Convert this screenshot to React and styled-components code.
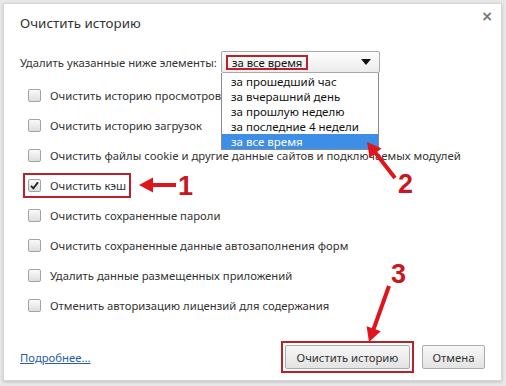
import React from "react";
import styled, { createGlobalStyle } from "styled-components";

const Global = createGlobalStyle`
  html, body { margin: 0; padding: 0; }
  body {
    background: #e8e8e8;
    font-family: "Noto Sans", "Open Sans", sans-serif;
    color: #333;
    width: 506px;
    height: 386px;
    overflow: hidden;
  }
`;

const FS = "11.3px";

const Page = styled.div`
  position: relative;
  width: 506px;
  height: 386px;
  padding: 3px 4px 5px 3px;
  box-sizing: border-box;
`;

const Card = styled.div`
  position: relative;
  height: 100%;
  box-sizing: border-box;
  background: #fff;
  border: 1px solid #d6d6d6;
  box-shadow: 0 1px 3px rgba(0, 0, 0, 0.18);
  padding: 0 16px 0 16px;
  display: flex;
  flex-direction: column;
`;

const Title = styled.div`
  margin-top: 9px;
  height: 20px;
  line-height: 20px;
  font-size: 13.4px;
  color: #333;
`;

const Close = styled.div`
  position: absolute;
  top: 4px;
  right: 8px;
  font-size: 14px;
  font-weight: 700;
  color: #777;
  font-family: "DejaVu Sans", sans-serif;
`;

const SelectRow = styled.div`
  margin-top: 18px;
  display: flex;
  align-items: center;
  height: 22px;
  font-size: ${FS};
`;

const SelectLabel = styled.span`
  width: 201px;
  flex-shrink: 0;
  white-space: nowrap;
`;

const SelectWrap = styled.div`
  position: relative;
  width: 159px;
  height: 22px;
`;

const SelectBox = styled.div`
  box-sizing: border-box;
  height: 22px;
  border: 1px solid #a9a9a9;
  border-radius: 2px;
  background: linear-gradient(#fdfdfd, #ececec);
  display: flex;
  align-items: center;
  justify-content: space-between;
  padding: 0 8px 0 4px;
`;

const Marked = styled.span`
  border: 2px solid #b8222a;
  padding: 0 4px;
  height: 15px;
  box-sizing: border-box;
  line-height: 11px;
  display: inline-flex;
  align-items: center;
  color: #111;
`;

const Caret = styled.span`
  width: 0;
  height: 0;
  border-left: 5px solid transparent;
  border-right: 5px solid transparent;
  border-top: 6px solid #111;
`;

const DropList = styled.div`
  position: absolute;
  top: 22px;
  left: 0;
  width: 158px;
  box-sizing: border-box;
  border: 1px solid #8a8a8a;
  border-top: none;
  background: #fff;
  z-index: 2;
  padding-top: 1px;
`;

const Option = styled.div`
  height: 15px;
  line-height: 15px;
  padding-left: 9px;
  font-size: 11.5px;
  color: ${(p) => (p.$active ? "#fff" : "#111")};
  background: ${(p) => (p.$active ? "#3d8ee6" : "transparent")};
`;

const List = styled.div`
  margin-top: 7px;
  display: flex;
  flex-direction: column;
`;

const Row = styled.div`
  height: 30px;
  display: flex;
  align-items: center;
  padding-left: 8px;
  font-size: ${FS};
`;

const RowInner = styled.span`
  display: inline-flex;
  align-items: center;
  gap: 9px;
  outline: ${(p) => (p.$on ? "2px solid #b8222a" : "none")};
  outline-offset: 3px;
`;

const Box = styled.span`
  width: 13px;
  height: 13px;
  box-sizing: border-box;
  border: 1px solid #a3a3a3;
  border-radius: 2px;
  background: linear-gradient(#fafafa, #dedede);
  display: inline-flex;
  align-items: center;
  justify-content: center;
`;

const Footer = styled.div`
  margin-top: auto;
  margin-bottom: 11px;
  display: flex;
  align-items: center;
  height: 24px;
`;

const Link = styled.a`
  font-size: ${FS};
  color: #2b5ca8;
  text-decoration: underline;
  margin-right: auto;
`;

const Frame = styled.div`
  border: 2px solid #b8222a;
  padding: 2px;
  margin: -4px 0;
  display: flex;
`;

const Button = styled.button`
  height: 24px;
  box-sizing: border-box;
  width: ${(p) => p.$w}px;
  margin-left: ${(p) => p.$ml || 0}px;
  border: 1px solid #acacac;
  border-radius: 2px;
  background: linear-gradient(#f7f7f7, #e3e3e3);
  font-family: "Noto Sans", "Open Sans", sans-serif;
  font-size: ${FS};
  color: #333;
  padding: 0;
`;

const Overlay = styled.svg`
  position: absolute;
  left: 0;
  top: 0;
  pointer-events: none;
  z-index: 5;
`;

const Check = () => (
  <svg width="9" height="9" viewBox="0 0 9 9">
    <path d="M1 4.8 L3.4 7.4 L8 1.2" fill="none" stroke="#222" strokeWidth="1.8" />
  </svg>
);

const items = [
  "Очистить историю просмотров",
  "Очистить историю загрузок",
  "Очистить файлы cookie и другие данные сайтов и подключаемых модулей",
  "Очистить кэш",
  "Очистить сохраненные пароли",
  "Очистить сохраненные данные автозаполнения форм",
  "Удалить данные размещенных приложений",
  "Отменить авторизацию лицензий для содержания",
];

const options = [
  "за прошедший час",
  "за вчерашний день",
  "за прошлую неделю",
  "за последние 4 недели",
  "за все время",
];

function Arrow({ x1, y1, x2, y2 }) {
  const dx = x2 - x1;
  const dy = y2 - y1;
  const len = Math.hypot(dx, dy);
  const ux = dx / len;
  const uy = dy / len;
  const hl = 14;
  const hw = 7.5;
  const bx = x2 - ux * hl;
  const by = y2 - uy * hl;
  const px = -uy;
  const py = ux;
  const pts = `${x2},${y2} ${bx + px * hw},${by + py * hw} ${bx - px * hw},${by - py * hw}`;
  return (
    <g>
      <line x1={x1} y1={y1} x2={bx + ux} y2={by + uy} stroke="#e0141b" strokeWidth="4" />
      <polygon points={pts} fill="#e0141b" />
    </g>
  );
}

const Digit = ({ x, y, children }) => (
  <text x={x} y={y} fill="#c8171e" fontFamily="Liberation Sans, sans-serif" fontWeight="700" fontSize="27">
    {children}
  </text>
);

export default function App() {
  return (
    <>
      <Global />
      <Page>
        <Card>
          <Title>Очистить историю</Title>
          <Close>×</Close>
          <SelectRow>
            <SelectLabel>Удалить указанные ниже элементы:</SelectLabel>
            <SelectWrap>
              <SelectBox>
                <Marked>за все время</Marked>
                <Caret />
              </SelectBox>
              <DropList>
                {options.map((o, i) => (
                  <Option key={o} $active={i === options.length - 1}>
                    {o}
                  </Option>
                ))}
              </DropList>
            </SelectWrap>
          </SelectRow>
          <List>
            {items.map((t, i) => (
              <Row key={t}>
                <RowInner $on={i === 3}>
                  <Box>{i === 3 && <Check />}</Box>
                  {t}
                </RowInner>
              </Row>
            ))}
          </List>
          <Footer>
            <Link href="#">Подробнее...</Link>
            <Frame>
              <Button $w={125}>Очистить историю</Button>
            </Frame>
            <Button $w={63} $ml={8}>Отмена</Button>
          </Footer>
        </Card>
        <Overlay width="506" height="386" viewBox="0 0 506 386">
          <Arrow x1={176} y1={185} x2={139} y2={185} />
          <Digit x={178} y={195}>1</Digit>
          <Arrow x1={395} y1={178} x2={367} y2={142} />
          <Digit x={398} y={193}>2</Digit>
          <Arrow x1={389} y1={286} x2={369} y2={342} />
          <Digit x={391} y={283}>3</Digit>
        </Overlay>
      </Page>
    </>
  );
}
